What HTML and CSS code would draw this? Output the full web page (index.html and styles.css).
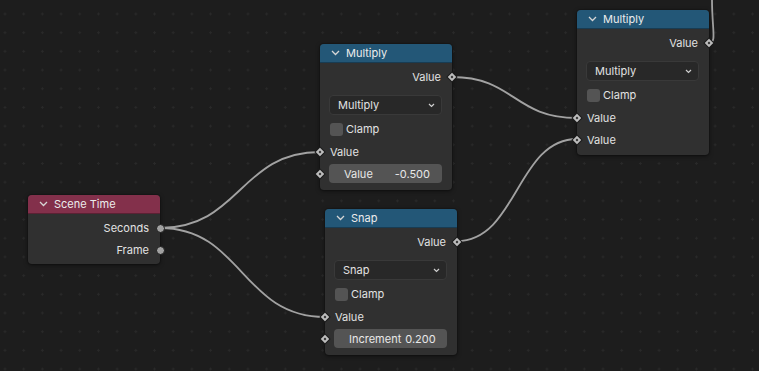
FILE: index.html
```html
<!DOCTYPE html>
<html lang="en">
<head>
    <meta charset="UTF-8">
    <title>Node Editor</title>
    <link rel="stylesheet" href="styles.css">
</head>
<body>
    <div class="canvas">
        <svg class="links" width="759" height="371" viewBox="0 0 759 371">
            <path d="M160 228 C240 228 240 152 320 152"/>
            <path d="M160 228 C242 228 242 317 325 317"/>
            <path d="M452 77 C514 77 514 118 577 118"/>
            <path d="M457 241 C517 241 517 139 577 139"/>
            <path d="M709 43 C717 43 712 30 712 0"/>
        </svg>

        <!-- Scene Time -->
        <div class="node node-time" style="left:28px;top:195px">
            <div class="node-header input-head">
                <svg class="chev" width="9" height="6" viewBox="0 0 9 6"><path d="M1 1 L4.5 4.5 L8 1"/></svg>
                Scene Time
            </div>
            <div class="node-body">
                <div class="row out">Seconds<span class="sock circle"></span></div>
                <div class="row out">Frame<span class="sock circle"></span></div>
            </div>
        </div>

        <!-- Multiply 1 -->
        <div class="node" style="left:320px;top:44px">
            <div class="node-header">
                <svg class="chev" width="9" height="6" viewBox="0 0 9 6"><path d="M1 1 L4.5 4.5 L8 1"/></svg>
                Multiply
            </div>
            <div class="node-body">
                <div class="row out">Value<span class="sock diamond"></span></div>
                <div class="dropdown">Multiply
                    <svg width="7" height="5" viewBox="0 0 7 5"><path d="M1 1 L3.5 3.5 L6 1"/></svg>
                </div>
                <div class="check"><span class="box"></span>Clamp</div>
                <div class="row in"><span class="sock diamond"></span>Value</div>
                <div class="field"><span class="sock diamond"></span><span>Value</span><span>-0.500</span></div>
            </div>
        </div>

        <!-- Snap -->
        <div class="node" style="left:325px;top:209px">
            <div class="node-header">
                <svg class="chev" width="9" height="6" viewBox="0 0 9 6"><path d="M1 1 L4.5 4.5 L8 1"/></svg>
                Snap
            </div>
            <div class="node-body">
                <div class="row out">Value<span class="sock diamond"></span></div>
                <div class="dropdown">Snap
                    <svg width="7" height="5" viewBox="0 0 7 5"><path d="M1 1 L3.5 3.5 L6 1"/></svg>
                </div>
                <div class="check"><span class="box"></span>Clamp</div>
                <div class="row in"><span class="sock diamond"></span>Value</div>
                <div class="field"><span class="sock diamond"></span><span>Increment</span><span>0.200</span></div>
            </div>
        </div>

        <!-- Multiply 2 -->
        <div class="node" style="left:577px;top:10px">
            <div class="node-header">
                <svg class="chev" width="9" height="6" viewBox="0 0 9 6"><path d="M1 1 L4.5 4.5 L8 1"/></svg>
                Multiply
            </div>
            <div class="node-body">
                <div class="row out">Value<span class="sock diamond"></span></div>
                <div class="dropdown">Multiply
                    <svg width="7" height="5" viewBox="0 0 7 5"><path d="M1 1 L3.5 3.5 L6 1"/></svg>
                </div>
                <div class="check"><span class="box"></span>Clamp</div>
                <div class="row in"><span class="sock diamond"></span>Value</div>
                <div class="row in short"><span class="sock diamond"></span>Value</div>
            </div>
        </div>
    </div>
</body>
</html>
```

FILE: styles.css
```css
body {
    margin: 0;
    background-color: #1d1d1d;
    font-family: Inter, "DejaVu Sans", sans-serif;
    font-size: 11px;
    color: #e2e2e2;
    overflow: hidden;
}
.canvas {
    position: relative;
    width: 759px;
    height: 371px;
    background-color: #1d1d1d;
    background-image: radial-gradient(circle, #292929 0, #292929 1px, transparent 1.2px);
    background-size: 18.7px 18.7px;
    background-position: -4.35px 4.65px;
}
.links {
    position: absolute;
    left: 0;
    top: 0;
    z-index: 0;
}
.links path {
    fill: none;
    stroke: #a2a2a2;
    stroke-width: 1.8;
}
.node {
    position: absolute;
    width: 132px;
    background-color: #303030;
    border-radius: 4px;
    box-shadow: 0 1px 4px rgba(0, 0, 0, 0.55), 0 0 0 1px #1a1a1a;
    z-index: 1;
}
.node-header {
    height: 19px;
    box-sizing: border-box;
    display: flex;
    align-items: center;
    gap: 6px;
    padding-left: 11px;
    background-color: #235777;
    border-radius: 4px 4px 0 0;
    border-bottom: 1px solid rgba(0, 0, 0, 0.3);
    color: #ececec;
}
.input-head {
    background-color: #83304b;
}
.chev path {
    fill: none;
    stroke: #d6d6d6;
    stroke-width: 1.3;
}
.node-body {
    display: flex;
    flex-direction: column;
    padding: 3px 0 5px;
}
.node-time .node-body {
    padding-bottom: 3px;
}
.row {
    position: relative;
    height: 22px;
    display: flex;
    align-items: center;
}
.row.out {
    justify-content: flex-end;
    padding-right: 11px;
}
.row.in {
    padding-left: 10px;
}
.row.short {
    height: 21px;
}
.sock {
    position: absolute;
    top: 50%;
}
.out .sock {
    right: 0;
}
.in .sock, .field .sock {
    left: 0;
}
.circle {
    width: 7px;
    height: 7px;
    margin: -4.5px -4.5px 0 0;
    border-radius: 50%;
    background-color: #a1a1a1;
    border: 1px solid #1a1a1a;
}
.diamond {
    width: 2px;
    height: 2px;
    margin-top: -3px;
    background-color: #2a2a2a;
    border: 2px solid #bdbdbd;
    box-shadow: 0 0 0 1px #1d1d1d;
    transform: rotate(45deg);
}
.out .diamond {
    margin-right: -3px;
}
.in .diamond, .field .diamond {
    margin-left: -3px;
}
.dropdown {
    margin: 7px 10px 0 9px;
    height: 20px;
    box-sizing: border-box;
    display: flex;
    align-items: center;
    justify-content: space-between;
    padding: 0 6px 0 8px;
    background-color: #282828;
    border: 1px solid #393939;
    border-radius: 4px;
    color: #e2e2e2;
}
.dropdown path {
    fill: none;
    stroke: #cfcfcf;
    stroke-width: 1.2;
}
.check {
    margin: 4px 0 0 10px;
    height: 20px;
    display: flex;
    align-items: center;
    gap: 3px;
}
.box {
    width: 13px;
    height: 13px;
    border-radius: 3px;
    background-color: #545454;
}
.check + .row {
    margin-top: 2px;
}
.field {
    position: relative;
    margin: 1px 10px 2px 9px;
    height: 19px;
    display: flex;
    align-items: center;
    justify-content: space-between;
    gap: 4px;
    padding: 0 12px 0 15px;
    background-color: #545454;
    border-radius: 4px;
    color: #e8e8e8;
}
.field .diamond {
    left: -9px;
}
```
